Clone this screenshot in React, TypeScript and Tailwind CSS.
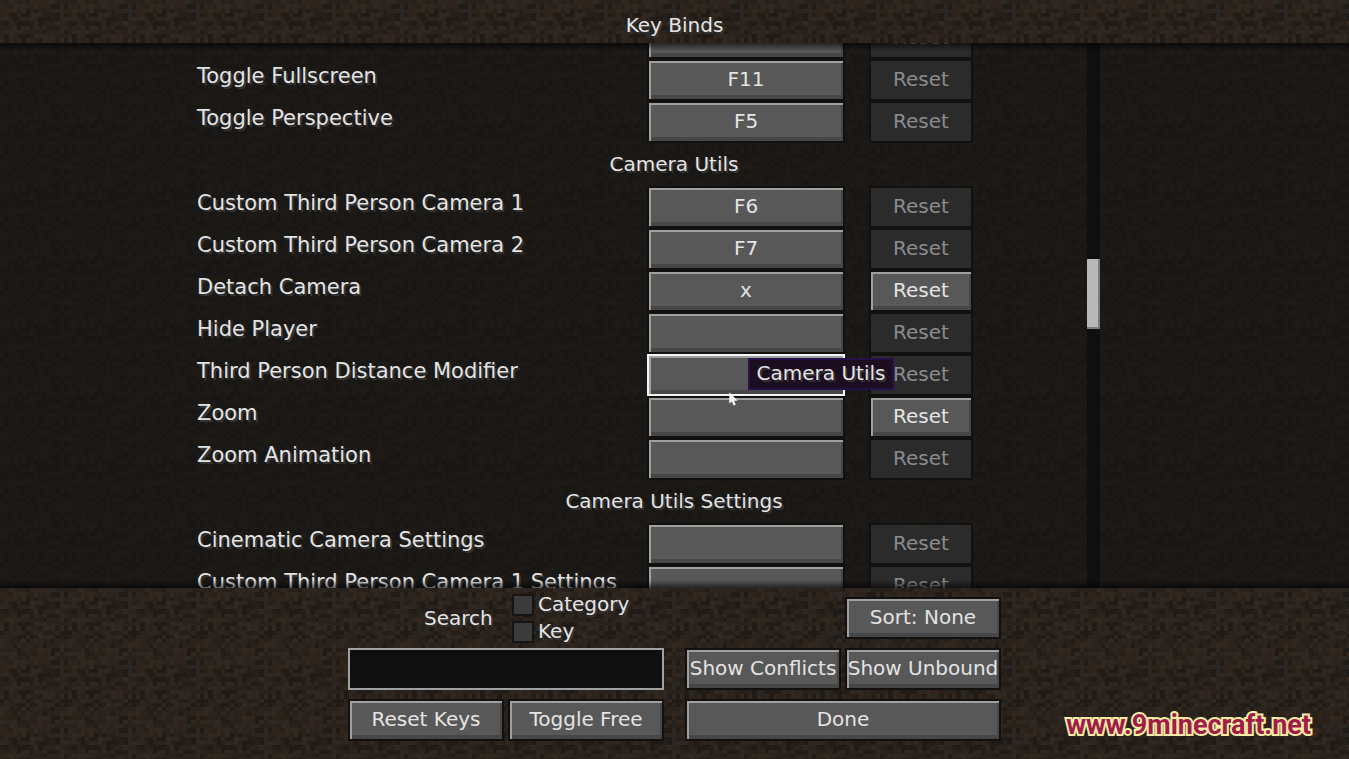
import { useId } from 'react';
import clsx from 'clsx';

type Bind = { name: string; bound: string; changed?: boolean; focused?: boolean };
type Entry = Bind | { category: string };

const entries: Entry[] = [
  { name: '', bound: '' },
  { name: 'Toggle Fullscreen', bound: 'F11' },
  { name: 'Toggle Perspective', bound: 'F5' },
  { category: 'Camera Utils' },
  { name: 'Custom Third Person Camera 1', bound: 'F6' },
  { name: 'Custom Third Person Camera 2', bound: 'F7' },
  { name: 'Detach Camera', bound: 'x', changed: true },
  { name: 'Hide Player', bound: '' },
  { name: 'Third Person Distance Modifier', bound: '', focused: true },
  { name: 'Zoom', bound: '', changed: true },
  { name: 'Zoom Animation', bound: '' },
  { category: 'Camera Utils Settings' },
  { name: 'Cinematic Camera Settings', bound: '' },
  { name: 'Custom Third Person Camera 1 Settings', bound: '' },
];

const DIRT = ['#2a211b', '#30261e', '#241e19', '#2c231d', '#211b17', '#2a2724', '#33281f', '#27211c'];
const DARK_DIRT = ['#1b1815', '#1d1a16', '#191714', '#1c1916', '#191715', '#1b1917', '#1e1b17', '#1a1816'];

// 16x16 block texture, same layout on every render
const cells = (() => {
  let seed = 77;
  return Array.from({ length: 256 }, () => {
    seed = (seed + 0x6d2b79f5) | 0;
    let t = Math.imul(seed ^ (seed >>> 15), 1 | seed);
    t = (t + Math.imul(t ^ (t >>> 7), 61 | t)) ^ t;
    return ((t ^ (t >>> 14)) >>> 0) % 8;
  });
})();

const Dirt = ({ palette }: { palette: string[] }) => {
  const id = useId();
  return (
    <svg className="absolute inset-0 -z-10 size-full" shapeRendering="crispEdges" aria-hidden="true">
      <pattern id={id} width="68" height="68" viewBox="0 0 16 16" patternUnits="userSpaceOnUse">
        <rect width="16" height="16" fill={palette[0]} />
        {cells.map((c, i) => (
          <rect key={i} x={i % 16} y={Math.floor(i / 16)} width="1" height="1" fill={palette[c]} />
        ))}
      </pattern>
      <rect width="100%" height="100%" fill={`url(#${id})`} />
    </svg>
  );
};

type McButtonProps = {
  label: string;
  title?: string;
  disabled?: boolean;
  focused?: boolean;
  className?: string;
};

const McButton = ({ label, title, disabled, focused, className }: McButtonProps) => (
  <button
    type="button"
    aria-label={title}
    disabled={disabled}
    className={clsx(
      'flex h-[42px] min-w-0 items-center justify-center whitespace-nowrap border-2 pb-0.5',
      focused ? 'border-[#f4f4f4]' : 'border-[#12110f]',
      disabled
        ? 'bg-[#2b2b2b] text-[#8c8c8c] [text-shadow:none]'
        : 'bg-[#585858] shadow-[inset_2px_2px_0_#a0a0a0,inset_-2px_-4px_0_#474747]',
      className,
    )}
  >
    {label}
  </button>
);

const Tooltip = ({ text }: { text: string }) => (
  <div
    role="tooltip"
    className="absolute left-[101px] top-1 z-20 flex h-8 w-[146px] items-center justify-center whitespace-nowrap border-2 border-[#26104a] bg-[#1c0d20] pb-0.5"
  >
    {text}
  </div>
);

const Cursor = () => (
  <svg className="absolute left-[82px] top-[38px] z-30" width="9" height="15" viewBox="0 0 9 15" aria-hidden="true">
    <path d="M0.3 0.3V11.5L2.8 9.5L4.6 13.6L6.8 12.8L5.1 8.8H8.7Z" fill="#f5f5f5" />
  </svg>
);

const BindRow = ({ name, bound, changed, focused }: Bind) => (
  <li className="grid h-[42px] grid-cols-[450px_198px_104px] items-center">
    <span className="whitespace-nowrap pb-2 text-[21px]">{name}</span>
    <div className="relative">
      <McButton label={bound} title={`${name} ${bound}`} focused={focused} className="w-full" />
      {focused && (
        <>
          <Tooltip text="Camera Utils" />
          <Cursor />
        </>
      )}
    </div>
    <McButton label="Reset" disabled={!changed} className="ml-6 w-[104px]" />
  </li>
);

const FilterBox = ({ label }: { label: string }) => (
  <label className="flex h-[22px] items-center gap-1">
    <input
      type="checkbox"
      className="size-[22px] appearance-none border-2 border-[#171514] bg-[#3a3b3c] checked:bg-[#a0a0a0]"
    />
    <span className="pb-0.5 leading-5">{label}</span>
  </label>
);

export default function App() {
  return (
    <div className="relative flex h-screen flex-col overflow-hidden bg-[#1b1815] font-['DejaVu_Sans',sans-serif] text-[20px] leading-6 text-[#e4e4e4] [text-shadow:2px_2px_0_#343434]">
      <header className="relative isolate flex h-[43px] shrink-0 items-center justify-center pt-1.5">
        <Dirt palette={DIRT} />
        <h1>Key Binds</h1>
      </header>

      <main className="relative isolate min-h-0 flex-1 overflow-hidden">
        <Dirt palette={DARK_DIRT} />
        <div className="mx-auto grid h-full max-w-[955px] grid-cols-[890px_13px]">
          <ul className="-mt-[26px]">
            {entries.map((entry, i) =>
              'category' in entry ? (
                <li key={i} className="flex h-[43px] items-center justify-center pb-0.5 pl-16">
                  <h2>{entry.category}</h2>
                </li>
              ) : (
                <BindRow key={i} {...entry} />
              ),
            )}
          </ul>
          <div className="bg-[#0f0f0f]">
            <div className="mt-[216px] h-[70px] border-b-2 border-r-2 border-[#7c7c7c] bg-[#b9b9b9]" />
          </div>
        </div>
        <div className="pointer-events-none absolute inset-x-0 top-0 h-2 bg-linear-to-b from-black/60 to-transparent" />
        <div className="pointer-events-none absolute inset-x-0 bottom-0 h-2 bg-linear-to-t from-black/60 to-transparent" />
      </main>

      <footer className="relative isolate flex shrink-0 justify-center gap-[21px] pb-[18px] pt-[9px]">
        <Dirt palette={DIRT} />
        <div className="grid w-[316px] grid-cols-2 gap-x-1 gap-y-[9px]">
          <div className="col-span-2 flex h-[42px] items-center pl-[76px]">
            <label htmlFor="search" className="w-[88px]">
              Search
            </label>
            <div className="flex flex-col gap-[5px]">
              <FilterBox label="Category" />
              <FilterBox label="Key" />
            </div>
          </div>
          <input
            id="search"
            type="text"
            className="col-span-2 h-[42px] w-full border-2 border-[#a0a0a0] bg-[#0f0f0f] px-2 outline-none"
          />
          <McButton label="Reset Keys" />
          <McButton label="Toggle Free" />
        </div>
        <div className="grid w-[316px] grid-cols-2 gap-x-1 gap-y-[9px]">
          <McButton label="Sort: None" className="col-start-2" />
          <McButton label="Show Conflicts" />
          <McButton label="Show Unbound" />
          <McButton label="Done" className="col-span-2" />
        </div>
      </footer>

      <a
        href="#"
        className="absolute bottom-[18px] right-[38px] z-20 font-['Roboto',sans-serif] text-[27px] font-bold leading-8 text-[#a01c48] [-webkit-text-stroke:4px_#f7eba6] [paint-order:stroke] [text-shadow:none]"
      >
        www.9minecraft.net
      </a>
    </div>
  );
}
